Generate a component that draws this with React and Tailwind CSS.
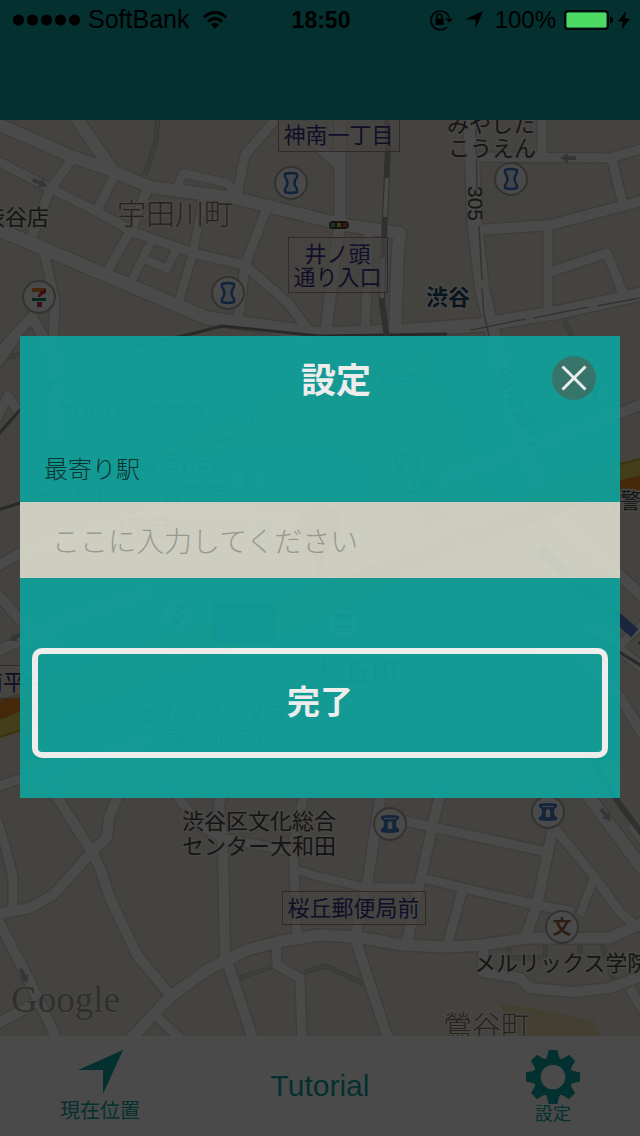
import React from "react";

const roads = [
  { w: 12, d: "M-5 123L73 157L113 171L150 187L235 198L320 219L345 225L400 233L398 248L395 336" },
  { w: 12, d: "M75 116L113 171" },
  { w: 9, d: "M-5 160L50 188L100 213L133 232L193 253L245 265" },
  { w: 13, d: "M-5 228L47 250L207 318L320 334L400 331L480 325L560 312L645 293" },
  { w: 9, d: "M73 158L50 190L32 236" },
  { w: 9, d: "M115 175L97 210" },
  { w: 9, d: "M147 190L131 230L108 270" },
  { w: 8, d: "M152 240L132 280" },
  { w: 8, d: "M145 259L167 269L176 250" },
  { w: 8, d: "M203 200L193 253L178 304" },
  { w: 9, d: "M267 208L245 265L238 322" },
  { w: 9, d: "M245 265L287 302L312 334" },
  { w: 9, d: "M282 112L245 155L237 195" },
  { w: 8, d: "M177 188L183 173L227 183L236 194" },
  { w: 9, d: "M43 248L55 302L53 345L58 440" },
  { w: 10, d: "M0 352L32 317L50 350" },
  { w: 11, d: "M340 115L340 222L325 336" },
  { w: 11, d: "M312 140L340 166" },
  { w: 9, d: "M369 230L365 336" },
  { w: 14, d: "M470 115L475 225L482 288L493 335L520 430L545 510" },
  { w: 9, d: "M475 157L610 158L645 148" },
  { w: 9, d: "M542 115L542 157" },
  { w: 10, d: "M478 230L550 225L645 200" },
  { w: 9, d: "M612 160L623 204" },
  { w: 9, d: "M548 228L548 312" },
  { w: 9, d: "M550 272L607 253L624 296" },
  { w: 9, d: "M-4 365L24 325" },
  { w: 9, d: "M-4 420L8 396L20 414" },
  { w: 10, d: "M-4 567L20 553L160 510L320 520" },
  { w: 10, d: "M-4 592L20 620L60 650" },
  { w: 10, d: "M-4 652L60 622L150 590" },
  { w: 9, d: "M-4 787L20 779L150 740" },
  { w: 10, d: "M440 480L620 413L645 403" },
  { w: 11, d: "M560 520L618 574L645 598" },
  { w: 8, d: "M612 652L645 622" },
  { w: 10, d: "M590 625L645 670" },
  { w: 10, d: "M580 650L622 700L645 738" },
  { w: 9, d: "M-3 820L5 845L13 878L13 910" },
  { w: 10, d: "M-3 914L30 908L53 895L92 852L107 837L109 818L118 796" },
  { w: 10, d: "M40 770L92 852L100 868L110 898L137 955L170 995" },
  { w: 11, d: "M128 1042L170 997L207 970L247 950L277 942L320 935L357 937L403 945L447 947L483 945L527 938L610 938L645 922" },
  { w: 10, d: "M-3 918L30 982L58 1042" },
  { w: 10, d: "M-3 1024L37 1002" },
  { w: 9, d: "M154 1014L184 1042" },
  { w: 10, d: "M225 780L219 805L223 850L225 955L254 1042" },
  { w: 9, d: "M165 780L200 826L222 838L295 852" },
  { w: 9, d: "M305 790L293 845L297 935" },
  { w: 8, d: "M297 870L320 877L363 887L417 888" },
  { w: 9, d: "M276 942L277 965L300 978L302 1042" },
  { w: 10, d: "M383 780L367 885L355 938L389 1042" },
  { w: 10, d: "M443 780L420 882L407 942" },
  { w: 9, d: "M390 818L437 828L547 852" },
  { w: 9, d: "M423 878L463 888L537 905L573 912" },
  { w: 9, d: "M463 888L448 942" },
  { w: 10, d: "M555 818L537 905L525 938" },
  { w: 9, d: "M548 820L593 875L620 912L636 926" },
  { w: 8, d: "M593 880L580 915" },
  { w: 12, d: "M575 778L645 872" },
  { w: 10, d: "M483 945L483 972L520 978L530 988L573 992L610 988L645 975" },
  { w: 9, d: "M630 988L645 1014" },
];

const footpaths = [
  "M158 116L156 140L145 175",
  "M237 979L276 965",
  "M304 972L326 966L366 985",
  "M509 944V958H545V944M580 944V954M602 944L614 982",
  "M564 320L574 340",
  "M193 798L198 780",
  "M0 360L20 354",
];

const labels = [
  { x: -17, y: 225, s: 22, t: "渋谷店" },
  { x: 117, y: 225, s: 29, t: "宇田川町", c: "fill-[#8a7b60] font-light" },
  { x: 447, y: 132, s: 22, t: "みやした" },
  { x: 448, y: 156, s: 22, t: "こうえん" },
  { x: 426, y: 305, s: 22, t: "渋谷", c: "fill-[#1b4a70] font-bold" },
  { x: 182, y: 829, s: 22, t: "渋谷区文化総合" },
  { x: 182, y: 854, s: 22, t: "センター大和田" },
  { x: 474, y: 971, s: 22, t: "メルリックス学院" },
  { x: 443, y: 1037, s: 29, t: "鶯谷町", c: "fill-[#8a7b60] font-light" },
  { x: 60, y: 421, s: 22, t: "TOHOシネマズ 渋谷" },
  { x: 376, y: 390, s: 22, t: "ハチ公" },
  { x: 93, y: 476, s: 22, t: "三菱東京UFJ" },
  { x: 73, y: 501, s: 22, t: "銀行・渋谷支店" },
  { x: 115, y: 536, s: 22, t: "1丁目" },
  { x: 578, y: 508, s: 21, t: "渋谷警" },
  { x: 318, y: 682, s: 27, t: "桜丘町" },
  { x: 134, y: 721, s: 22, t: "セルリアンタワー" },
  { x: 166, y: 746, s: 22, t: "東急ホテル" },
];

const crossings = [
  { x: 278, y: 112, w: 121, h: 39, lines: ["神南一丁目"], ty: [143] },
  { x: 288, y: 237, w: 99, h: 55, lines: ["井ノ頭", "通り入口"], ty: [262, 285] },
  { x: 282, y: 891, w: 143, h: 33, lines: ["桜丘郵便局前"], ty: [916] },
  { x: -26, y: 665, w: 80, h: 33, lines: ["南平台"], ty: [690] },
];

function Pin({ x, y, children }) {
  return (
    <g transform={`translate(${x} ${y})`}>
      <circle r="16" fill="#fdfdfd" stroke="#b0aeaa" strokeWidth="2" />
      {children}
    </g>
  );
}

function Gate() {
  return <path d="M-6 -9Q0 -11 6 -9L6 -6Q1 0 6 6L6 9Q0 11 -6 9L-6 6Q-1 0 -6 -6Z" fill="#e6effb" stroke="#3c78c8" strokeWidth="2.4" />;
}

function Shop() {
  return (
    <g>
      <path d="M-9 -8Q0 -10 9 -8V-5L7 -4Q5 0 7 4L9 5V8Q0 10 -9 8V5L-7 4Q-5 0 -7 -4L-9 -5Z" fill="#4a80d0" />
      <path d="M-6 -5.5H6" stroke="#dfe9f8" strokeWidth="1.2" />
      <path d="M-2.2 5V-1L0 -3.5L2.2 -1V5Z" fill="#fff" />
    </g>
  );
}

function Seven() {
  return (
    <g>
      <path d="M-7 -9H7L3 -5H-7Z" fill="#ea8a2e" />
      <path d="M7 -9V-4Q2 -2 1 0H-1Q-1 -4 3 -6Z" fill="#c8323a" />
      <path d="M-7 1H7V4H-7Z" fill="#1b8a5a" />
      <path d="M-2 5H3V10H-2Z" fill="#c8323a" />
    </g>
  );
}

function OneWay({ x, y, r }) {
  return <path transform={`translate(${x} ${y}) rotate(${r})`} d="M-8 -2H0V-5L8 0L0 5V2H-8Z" fill="#b4bac0" />;
}

function MapView() {
  return (
    <svg viewBox="0 120 640 916" preserveAspectRatio="xMidYMid slice" role="img" aria-label="渋谷の地図" className="h-full w-full font-['Noto_Sans_CJK_JP',sans-serif]">
      <rect x="-400" y="-200" width="1440" height="1600" fill="#eee7db" />
      <path d="M498 1002L593 1020L604 1040H520Z" fill="#e5dcab" />
      <path d="M150 455L260 402L430 352L480 480L530 580L405 585L365 465L320 445Z" fill="#dcb9b0" />
      <g fill="none" strokeLinejoin="round">
        {footpaths.map((d) => (
          <g key={d}>
            <path d={d} stroke="#c3c3b3" strokeWidth="5" />
            <path d={d} stroke="#d6d8cb" strokeWidth="3" />
          </g>
        ))}
        {roads.map((r) => <path key={r.d} d={r.d} stroke="#d9d2c5" strokeWidth={r.w + 3} />)}
        {roads.map((r) => <path key={r.d} d={r.d} stroke="#ffffff" strokeWidth={r.w} />)}
        <path d="M-5 727L20 719L150 667L300 612L480 534L570 488L645 469" stroke="#c9a92f" strokeWidth="24" />
        <path d="M-5 727L20 719L150 667L300 612L480 534L570 488L645 469" stroke="#e8d45c" strokeWidth="20" />
        <path d="M-5 712L20 702L150 652L300 602L480 534L570 500L645 484" stroke="#e58a1f" strokeWidth="18" />
        <path d="M-5 438L20 410L60 378L120 350L187 335L222 326L320 336L447 334" stroke="#8c8c8c" strokeWidth="3" />
        <path d="M-5 511L20 503L120 470L260 430" stroke="#8c8c8c" strokeWidth="3" />
        <path d="M387 120L388 148L385 215L382 302L388 345L420 480L500 610L618 802L645 838" stroke="#a4a4a4" strokeWidth="6" />
        <path d="M387 178L385 217M383 258L382 298M630 826L645 846" stroke="#fff" strokeWidth="4" />
        <path d="M540 550L645 642" stroke="#5f84d6" strokeWidth="11" strokeDasharray="36 9" />
        <path d="M480 580L600 640L645 668" stroke="#8c8c8c" strokeWidth="3" />
        <path d="M476 120L477 190M479 226L482 280M482 288L484 315L490 340" stroke="#b0afa9" strokeWidth="1.5" />
        <path d="M471 330L526 319M534 318L588 307M597 306L645 297" stroke="#b0afa9" strokeWidth="1.5" />
      </g>
      <OneWay x={40} y={183} r={25} />
      <OneWay x={568} y={158} r={180} />
      <OneWay x={24} y={976} r={65} />
      <OneWay x={606} y={815} r={50} />
      <OneWay x={16} y={637} r={150} />
      {crossings.map((c) => (
        <g key={c.lines[0]}>
          <rect x={c.x + 0.5} y={c.y + 0.5} width={c.w} height={c.h} fill="#f1ebe2" fillOpacity=".6" stroke="#b48e90" />
          {c.lines.map((line, i) => (
            <text key={line} x={c.x + c.w / 2} y={c.ty[i]} textAnchor="middle" fontSize="22" className="fill-[#3c3688]">{line}</text>
          ))}
        </g>
      ))}
      {labels.map((l) => (
        <text key={l.x + l.t} x={l.x} y={l.y} fontSize={l.s} paintOrder="stroke" stroke="#f7f4ee" strokeWidth="3" className={l.c || "fill-[#4c4a45]"}>{l.t}</text>
      ))}
      <text transform="translate(468 186) rotate(90)" fontSize="21" className="fill-[#4c4a45] font-['Liberation_Sans',sans-serif]">305</text>
      <text transform="translate(392 455) rotate(65)" fontSize="28" className="fill-[#4c4a45]">山手線</text>
      <text transform="translate(497 370) rotate(68)" fontSize="22" className="fill-[#4c4a45]">明治通り</text>
      <rect x="213" y="603" width="62" height="40" fill="#2a70a0" />
      <text x="221" y="631" fontSize="23" className="fill-[#9fc0d6]">渋谷</text>
      <Pin x={291} y={183}><Gate /></Pin>
      <Pin x={228} y={293}><Gate /></Pin>
      <Pin x={511} y={179}><Gate /></Pin>
      <Pin x={250} y={480}><Gate /></Pin>
      <Pin x={264} y={532}><Gate /></Pin>
      <Pin x={39} y={297}><Seven /></Pin>
      <Pin x={177} y={614}><Seven /></Pin>
      <Pin x={593} y={389}><path d="M-8 -7V6L-3 -5L2 7L7 -7" fill="none" stroke="#4a80d0" strokeWidth="3" /></Pin>
      <Pin x={343} y={623}><path d="M-9 -9H9V-1H-9ZM-9 3H9V5H-9ZM-9 7H9V9H-9Z" fill="#3c78c8" /></Pin>
      <Pin x={390} y={824}><Shop /></Pin>
      <Pin x={548} y={812}><Shop /></Pin>
      <Pin x={562} y={927}><text y="7" textAnchor="middle" fontSize="19" className="fill-[#a0663a] font-bold">文</text></Pin>
      <g>
        <rect x="329" y="221" width="20" height="8" rx="4" fill="#4e4431" />
        <path d="M331 223h4v4h-4z" fill="#5fae72" />
        <path d="M337 223h4v4h-4z" fill="#d8c64a" />
        <path d="M343 223h4v4h-4z" fill="#cc5a5a" />
      </g>
      <path d="M319 578Q315 552 303 538A21 21 0 1 1 335 538Q323 552 319 578Z" fill="#f0877f" stroke="#b8544e" />
      <text x="11" y="1012" fontSize="37" paintOrder="stroke" stroke="#f7f4ee" strokeWidth="2" className="fill-[#a9a7a2] font-['Liberation_Serif',serif]">Google</text>
    </svg>
  );
}

function StatusBar() {
  return (
    <div className="relative z-10 flex h-10 items-center pr-2.5 pl-3 font-['Liberation_Sans',Arial,sans-serif] text-2xl text-black">
      <div className="flex flex-1 items-center">
        <svg viewBox="0 0 68 12" className="h-3 w-17" aria-hidden="true">
          {[6.5, 20.5, 34.5, 48.5, 62.5].map((x) => <circle key={x} cx={x} cy="6" r="5.6" />)}
        </svg>
        <span className="ml-2 text-[25px]">SoftBank</span>
        <svg viewBox="0 0 24 18" className="ml-3.5 h-[18px] w-6" fill="none" stroke="#000" strokeWidth="3" aria-hidden="true">
          <path d="M1 6.4Q12 -3.4 23 6.4" />
          <path d="M5 10.6Q12 4.2 19 10.6" />
          <path d="M8 13.5Q12 9.8 16 13.5L12 18Z" fill="#000" stroke="none" />
        </svg>
      </div>
      <span className="text-[23px] font-bold">18:50</span>
      <div className="flex flex-1 items-center justify-end">
        <svg viewBox="0 0 24 22" className="h-[22px] w-6" fill="none" stroke="#000" strokeWidth="1.6" aria-hidden="true">
          <path d="M20.2 8.5A9.4 9.4 0 1 0 18 18" />
          <path d="M16.5 9.5H24L20.3 13.5Z" fill="#000" stroke="none" />
          <rect x="6.5" y="9.5" width="8" height="6.5" fill="#000" stroke="none" />
          <path d="M8 10V7.5A2.5 2.5 0 0 1 13 7.5V10" />
        </svg>
        <svg viewBox="0 0 18 18" className="ml-3 h-[18px] w-[18px]" aria-hidden="true"><path d="M18 0L10.5 18V8.5H0Z" /></svg>
        <span className="ml-3">100%</span>
        <svg viewBox="0 0 50 20" className="ml-2 h-5 w-[50px]" aria-hidden="true">
          <rect x="1" y="1" width="43" height="18" rx="3" fill="none" stroke="#000" strokeWidth="1.6" />
          <rect x="2.5" y="2.5" width="40" height="15" rx="1.5" fill="#4cd964" />
          <path d="M46 6.5Q49 7 49 10Q49 13 46 13.5Z" />
        </svg>
        <svg viewBox="0 0 12 19" className="ml-1 h-[19px] w-3" aria-hidden="true"><path d="M8 0L0 10.5H5L3.5 19L12 7.5H6.8Z" /></svg>
      </div>
    </div>
  );
}

function GearIcon() {
  return (
    <svg viewBox="-27 -27 54 54" className="size-[54px]" fill="currentColor" aria-hidden="true">
      <path fillRule="evenodd" d="M12.3 0A12.3 12.3 0 1 0 -12.3 0A12.3 12.3 0 1 0 12.3 0ZM19.5 0A19.5 19.5 0 1 1 -19.5 0A19.5 19.5 0 1 1 19.5 0Z" />
      {[0, 45, 90, 135, 180, 225, 270, 315].map((a) => (
        <path key={a} transform={`rotate(${a})`} d="M-8 -16Q-5.5 -20 -4.4 -27H4.4Q5.5 -20 8 -16Z" />
      ))}
    </svg>
  );
}

function TabBar() {
  return (
    <nav className="grid h-25 grid-cols-3 items-center bg-white px-3 font-['Liberation_Sans','Noto_Sans_CJK_JP',sans-serif] text-[#0ea5a2]">
      <button type="button" className="ml-12 flex h-full flex-col items-center justify-self-start pt-3.5">
        <svg viewBox="0 0 45 45" className="size-[45px]" fill="currentColor" aria-hidden="true"><path d="M45 0L25 44V20H0Z" /></svg>
        <span className="text-xl leading-8">現在位置</span>
      </button>
      <button type="button" className="justify-self-center text-3xl">Tutorial</button>
      <button type="button" className="mr-12 flex h-full flex-col items-center justify-self-end pt-3.5">
        <GearIcon />
        <span className="text-lg leading-5">設定</span>
      </button>
    </nav>
  );
}

function SettingsDialog() {
  return (
    <section role="dialog" aria-modal="true" aria-labelledby="settings-title" className="relative w-full bg-[#11a19b] pb-10 font-['Noto_Sans_CJK_JP',sans-serif] opacity-93">
      <div className="flex items-center pt-5 pr-6 pl-25">
        <h1 id="settings-title" className="flex-1 text-center text-[35px] leading-11 font-bold text-[#fafafa]">設定</h1>
        <button type="button" aria-label="閉じる" className="flex size-11 items-center justify-center rounded-full bg-[#36796f]">
          <svg viewBox="0 0 26 26" className="size-[26px]" stroke="#fafafa" strokeWidth="3" aria-hidden="true"><path d="M1.5 1.5L24.5 24.5M24.5 1.5L1.5 24.5" /></svg>
        </button>
      </div>
      <label htmlFor="station" className="mt-13 block px-6 text-2xl leading-8 font-light text-[#0a3331]">最寄り駅</label>
      <input id="station" type="text" placeholder="ここに入力してください" className="mt-4.5 block h-19 w-full bg-[#d8d8ca] px-8 text-[28px] font-light text-[#333333] outline-none placeholder:text-[#a09f98]" />
      <div className="px-3 pt-17.5">
        <button type="button" className="flex h-27.5 w-full items-center justify-center rounded-[10px] border-6 border-[#fafafa] pb-1 text-[33px] font-bold text-[#fafafa]">完了</button>
      </div>
    </section>
  );
}

export default function App() {
  return (
    <div className="relative flex h-screen min-h-[640px] flex-col overflow-hidden">
      <header className="h-30 shrink-0 bg-[#0ea5a2]">
        <StatusBar />
      </header>
      <main className="min-h-0 flex-1">
        <MapView />
      </main>
      <TabBar />
      <div className="absolute inset-0 flex items-center bg-black/71 px-5 pb-0.5">
        <SettingsDialog />
      </div>
    </div>
  );
}
